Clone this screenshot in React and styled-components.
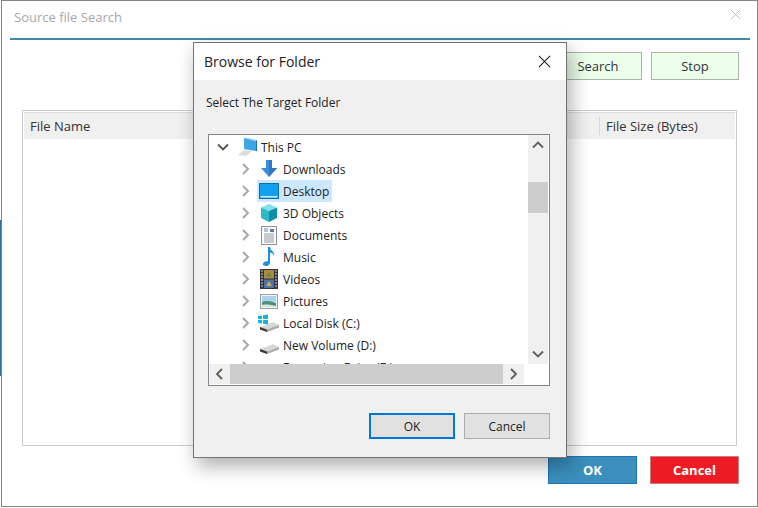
import React from "react";
import styled, { createGlobalStyle } from "styled-components";

const GlobalStyle = createGlobalStyle`
  html, body {
    margin: 0;
    padding: 0;
    background: #fff;
    font-family: "Open Sans", "Noto Sans", "Liberation Sans", sans-serif;
    overflow: hidden;
  }
`;

const Close = ({ size, color }) => (
  <svg width={size} height={size} viewBox="0 0 14 14" fill="none" stroke={color} strokeWidth="1.1">
    <path d="M1 1 L13 13 M13 1 L1 13" />
  </svg>
);

const Chevron = ({ dir = "right", color = "#a6a6a6", width = 1.9 }) => {
  const paths = {
    right: "M3 1 L8 6 L3 11",
    left: "M8 1 L3 6 L8 11",
    down: "M1 3.5 L6 8.5 L11 3.5",
    up: "M1 8.5 L6 3.5 L11 8.5",
  };
  return (
    <svg width="12" height="12" viewBox="0 0 12 12" fill="none" stroke={color} strokeWidth={width}>
      <path d={paths[dir]} />
    </svg>
  );
};

const PcIcon = () => (
  <svg width="21" height="20" viewBox="0 0 21 20">
    <path d="M1 18 L7 13 L15 14 L9 19 Z" fill="#dcdcdc" />
    <path d="M7 1 L19 4 L19 14 L7 12 Z" fill="#3ea6e6" />
    <path d="M7 1 L9 0.5 L20 3 L19 4 Z" fill="#9ad4f5" />
    <path d="M19 4 L20 3 L20 14 L19 14 Z" fill="#1a6ea8" />
  </svg>
);

const DownloadIcon = () => (
  <svg width="18" height="18" viewBox="0 0 18 18">
    <path d="M6 0 H12 V8 H17 L9 17 L1 8 H6 Z" fill="#3d8fdc" />
    <path d="M9 0 H12 V8 H17 L9 17 Z" fill="#2f78c4" />
  </svg>
);

const DesktopIcon = () => (
  <svg width="20" height="16" viewBox="0 0 20 16">
    <rect x="0.5" y="0.5" width="19" height="15" fill="#12a0f0" stroke="#0a6fb5" />
    <rect x="1.5" y="13" width="17" height="1.5" fill="#cdeBfb" />
  </svg>
);

const ObjectsIcon = () => (
  <svg width="18" height="20" viewBox="0 0 18 20">
    <path d="M9 1 L17 4.5 L9 8 L1 4.5 Z" fill="#7fe0e6" />
    <path d="M1 4.5 L9 8 V19 L1 15 Z" fill="#2cb9c9" />
    <path d="M17 4.5 L9 8 V19 L17 15 Z" fill="#108ea6" />
  </svg>
);

const DocumentIcon = () => (
  <svg width="16" height="19" viewBox="0 0 16 19">
    <path d="M0.5 0.5 H15.5 V18.5 H0.5 Z" fill="#fdfdfd" stroke="#8a8f96" />
    <path d="M3 3 H7 M3 5 H7" stroke="#4a90c8" strokeWidth="1" />
    <path d="M3 8 H13 M3 10 H13 M3 12 H13 M3 14 H13 M3 16 H13" stroke="#8c99a6" strokeWidth="1" />
    <rect x="9" y="3" width="4" height="3" fill="#5a7fa0" />
  </svg>
);

const MusicIcon = () => (
  <svg width="14" height="20" viewBox="0 0 14 20">
    <path d="M6 0 H8 C8 4 13 4 12 9 C11 6 9.5 6 8 5.5 V16 C8 19 2 20 1 17.5 C0.5 15 4 13.5 6 14.5 Z" fill="#1b8fe0" />
  </svg>
);

const VideoIcon = () => (
  <svg width="18" height="20" viewBox="0 0 18 20">
    <rect width="18" height="20" fill="#33333d" />
    <rect x="4" y="1" width="10" height="8.5" fill="#b08a3c" />
    <rect x="4" y="10.5" width="10" height="8.5" fill="#4f6fa8" />
    <path d="M6 7 L9 3 L12 8 Z" fill="#5d8f4a" />
    <path d="M6 17 L9 12 L12 17 Z" fill="#c8b04a" />
    <path d="M1 2 H3 M1 5 H3 M1 8 H3 M1 11 H3 M1 14 H3 M1 17 H3 M15 2 H17 M15 5 H17 M15 8 H17 M15 11 H17 M15 14 H17 M15 17 H17" stroke="#d5d5d5" strokeWidth="1.2" />
  </svg>
);

const PictureIcon = () => (
  <svg width="18" height="15" viewBox="0 0 18 15">
    <rect x="0.5" y="0.5" width="17" height="14" fill="#f2f2f2" stroke="#9a9fa5" />
    <rect x="2" y="2" width="14" height="6" fill="#a8d4ec" />
    <path d="M2 8 C6 6 11 7 16 9 V13 H2 Z" fill="#4f9178" />
    <path d="M2 11 C7 10 11 11 16 12 V13 H2 Z" fill="#d9e6dd" />
  </svg>
);

const DiskBody = () => (
  <>
    <path d="M2 13 L15 8 L21 11 L21 13.5 L9 18 L2 15.5 Z" fill="#d8d8d8" />
    <path d="M2 13 L9 15.5 L9 18 L2 15.5 Z" fill="#3c3c3c" />
    <path d="M9 15.5 L21 11 L21 13.5 L9 18 Z" fill="#aeaeae" />
  </>
);

const LocalDiskIcon = () => (
  <svg width="22" height="18" viewBox="0 0 22 18">
    <DiskBody />
    <path d="M0 2 L4 1.4 V5 H0 Z M5 1.2 L10 0.4 V5 H5 Z M0 6 H4 V9.5 L0 9 Z M5 6 H10 V10.5 L5 9.7 Z" fill="#12b5d8" />
  </svg>
);

const VolumeIcon = () => (
  <svg width="22" height="18" viewBox="0 0 22 18">
    <DiskBody />
  </svg>
);

const rows = [
  { label: "Downloads", icon: <DownloadIcon /> },
  { label: "Desktop", icon: <DesktopIcon />, selected: true },
  { label: "3D Objects", icon: <ObjectsIcon /> },
  { label: "Documents", icon: <DocumentIcon /> },
  { label: "Music", icon: <MusicIcon /> },
  { label: "Videos", icon: <VideoIcon /> },
  { label: "Pictures", icon: <PictureIcon /> },
  { label: "Local Disk (C:)", icon: <LocalDiskIcon /> },
  { label: "New Volume (D:)", icon: <VolumeIcon /> },
  { label: "Expansion Drive (E:)", icon: <VolumeIcon /> },
];

const App = () => {
  return (
    <>
      <GlobalStyle />
      <Edge />
      <Window>
        <TitleBar>
          <TitleText>Source file Search</TitleText>
          <Close size={11} color="#b5b5b5" />
        </TitleBar>
        <Toolbar>
          <GreenButton>Search</GreenButton>
          <GreenButton>Stop</GreenButton>
        </Toolbar>
        <Table>
          <TableHead>
            <NameColumn>File Name</NameColumn>
            <SizeColumn>File Size (Bytes)</SizeColumn>
          </TableHead>
        </Table>
        <Footer>
          <ActionButton $bg="#3a8fbd" $border="#1f74b5">OK</ActionButton>
          <ActionButton $bg="#ed1c24" $border="#c88080">Cancel</ActionButton>
        </Footer>

        <Dialog>
          <DialogHead>
            <DialogTitle>Browse for Folder</DialogTitle>
            <Close size={13} color="#1a1a1a" />
          </DialogHead>
          <DialogBody>
            <Prompt>Select The Target Folder</Prompt>
            <TreeBox>
              <TreeMain>
                <TreeList>
                  <RootRow>
                    <RootArrow><Chevron dir="down" color="#555" /></RootArrow>
                    <PcIcon />
                    <RootLabel>This PC</RootLabel>
                  </RootRow>
                  {rows.map((row) => (
                    <TreeRow key={row.label}>
                      <RowArrow><Chevron /></RowArrow>
                      <RowContent $selected={row.selected}>
                        <RowIcon>{row.icon}</RowIcon>
                        <RowLabel>{row.label}</RowLabel>
                      </RowContent>
                    </TreeRow>
                  ))}
                </TreeList>
                <VScroll>
                  <ScrollEnd><Chevron dir="up" color="#606060" /></ScrollEnd>
                  <VTrack><VThumb /></VTrack>
                  <ScrollEnd><Chevron dir="down" color="#606060" /></ScrollEnd>
                </VScroll>
              </TreeMain>
              <HScroll>
                <HEnd><Chevron dir="left" color="#606060" /></HEnd>
                <HThumb />
                <HEnd><Chevron dir="right" color="#606060" /></HEnd>
                <Corner />
              </HScroll>
            </TreeBox>
            <DialogButtons>
              <SystemButton $primary>OK</SystemButton>
              <SystemButton>Cancel</SystemButton>
            </DialogButtons>
          </DialogBody>
        </Dialog>
      </Window>
    </>
  );
};

export default App;

const Edge = styled.div`
  position: absolute;
  left: 0;
  top: 220px;
  width: 1px;
  height: 156px;
  background: #2f6f9f;
`;

const Window = styled.div`
  position: relative;
  display: flex;
  flex-direction: column;
  box-sizing: border-box;
  width: 757px;
  height: 507px;
  margin-left: 1px;
  border: 1px solid #858585;
  background: #fff;
`;

const TitleBar = styled.div`
  display: flex;
  align-items: center;
  justify-content: space-between;
  box-sizing: border-box;
  height: 39px;
  margin: 0 7px 0 8px;
  padding: 0 9px 10px 4px;
  border-bottom: 2px solid #3f8aa6;
`;

const TitleText = styled.div`
  font-size: 13px;
  color: #a8a8a8;
  margin-top: 5px;
`;

const Toolbar = styled.div`
  display: flex;
  justify-content: flex-end;
  gap: 9px;
  margin-top: 12px;
  padding-right: 18px;
`;

const GreenButton = styled.div`
  display: flex;
  align-items: center;
  justify-content: center;
  box-sizing: border-box;
  width: 88px;
  height: 28px;
  border: 1px solid #a9b5a9;
  background: #ebffeb;
  font-size: 13px;
  color: #333;
`;

const Table = styled.div`
  box-sizing: border-box;
  height: 336px;
  margin: 30px 20px 0;
  padding: 1px;
  border: 1px solid #cccccc;
`;

const TableHead = styled.div`
  display: flex;
  height: 26px;
  align-items: center;
  background: #f0f0f0;
  border-top: 1px solid #dddddd;
  font-size: 13px;
  color: #333;
`;

const NameColumn = styled.div`
  flex: 1;
  padding-left: 6px;
`;

const SizeColumn = styled.div`
  box-sizing: border-box;
  width: 136px;
  padding-left: 6px;
  border-left: 1px solid #d8d8d8;
`;

const Footer = styled.div`
  display: flex;
  justify-content: flex-end;
  gap: 13px;
  margin-top: 10px;
  padding-right: 18px;
`;

const ActionButton = styled.div`
  display: flex;
  align-items: center;
  justify-content: center;
  box-sizing: border-box;
  width: 89px;
  height: 28px;
  border: 1px solid ${(p) => p.$border};
  background: ${(p) => p.$bg};
  color: #fff;
  font-size: 13px;
  font-weight: 700;
`;

const Dialog = styled.div`
  position: absolute;
  left: 191px;
  top: 41px;
  display: flex;
  flex-direction: column;
  box-sizing: border-box;
  width: 374px;
  height: 416px;
  border: 1px solid #747474;
  background: #f0f0f0;
  box-shadow: 4px 8px 18px rgba(0, 0, 0, 0.32);
`;

const DialogHead = styled.div`
  display: flex;
  align-items: center;
  justify-content: space-between;
  height: 37px;
  padding: 0 15px 0 10px;
  background: #fff;
`;

const DialogTitle = styled.div`
  font-size: 14px;
  color: #222;
`;

const DialogBody = styled.div`
  display: flex;
  flex: 1;
  flex-direction: column;
  padding: 0 16px 0 12px;
`;

const Prompt = styled.div`
  margin-top: 14px;
  font-size: 12px;
  color: #222;
`;

const TreeBox = styled.div`
  display: flex;
  flex-direction: column;
  box-sizing: border-box;
  width: 342px;
  height: 252px;
  margin: 23px 0 0 2px;
  border: 1px solid #82878f;
  background: #fff;
`;

const TreeMain = styled.div`
  display: flex;
  flex: 1;
  min-height: 0;
`;

const TreeList = styled.div`
  flex: 1;
  min-width: 0;
  overflow: hidden;
  padding-top: 1px;
`;

const RootRow = styled.div`
  display: flex;
  align-items: center;
  height: 22px;
`;

const RootArrow = styled.div`
  display: flex;
  justify-content: center;
  width: 28px;
`;

const RootLabel = styled.div`
  margin-left: 3px;
  font-size: 12px;
  color: #222;
`;

const TreeRow = styled.div`
  display: flex;
  align-items: center;
  height: 22px;
`;

const RowArrow = styled.div`
  display: flex;
  justify-content: center;
  width: 20px;
  margin-left: 27px;
  margin-right: 1px;
`;

const RowContent = styled.div`
  display: flex;
  align-items: center;
  height: 22px;
  padding: 0 3px 0 1px;
  background: ${(p) => (p.$selected ? "#cce8ff" : "transparent")};
`;

const RowIcon = styled.div`
  display: flex;
  justify-content: center;
  width: 22px;
`;

const RowLabel = styled.div`
  margin-left: 3px;
  font-size: 12px;
  color: #222;
  white-space: nowrap;
`;

const VScroll = styled.div`
  display: flex;
  flex-direction: column;
  width: 20px;
  margin-right: 1px;
  background: #f0f0f0;
`;

const ScrollEnd = styled.div`
  display: flex;
  align-items: center;
  justify-content: center;
  height: 20px;
`;

const VTrack = styled.div`
  flex: 1;
  padding-top: 27px;
`;

const VThumb = styled.div`
  height: 31px;
  background: #cdcdcd;
`;

const HScroll = styled.div`
  display: flex;
  height: 20px;
  margin-bottom: 1px;
`;

const HEnd = styled.div`
  display: flex;
  align-items: center;
  justify-content: center;
  flex: none;
  width: 21px;
  background: #f0f0f0;
`;

const HThumb = styled.div`
  flex: none;
  width: 273px;
  background: #cdcdcd;
`;

const Corner = styled.div`
  flex: 1;
  background: #fff;
`;

const DialogButtons = styled.div`
  display: flex;
  justify-content: flex-end;
  gap: 9px;
  margin-top: 27px;
`;

const SystemButton = styled.div`
  display: flex;
  align-items: center;
  justify-content: center;
  box-sizing: border-box;
  width: 86px;
  height: 26px;
  border: ${(p) => (p.$primary ? "2px solid #0078d7" : "1px solid #adadad")};
  background: #e1e1e1;
  font-size: 12px;
  color: #222;
`;
